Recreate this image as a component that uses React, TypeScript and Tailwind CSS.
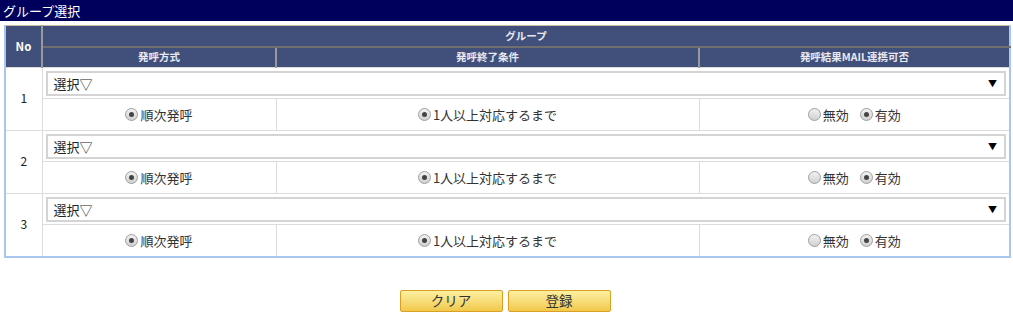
import React from 'react';

const font = { fontFamily: '"Noto Sans CJK JP", "Noto Sans", sans-serif' };

const Radio: React.FC<{ checked?: boolean; label: string }> = ({ checked, label }) => (
    <span className="inline-flex items-center gap-[2px] leading-none align-middle">
        <span className="w-[13px] h-[13px] rounded-full border border-[#a0a0a0] bg-gradient-to-b from-[#f2f2f2] to-[#d0d0d0] flex items-center justify-center">
            {checked && <span className="w-[5px] h-[5px] rounded-full bg-[#444]" />}
        </span>
        <span className="text-[13px] text-[#333] leading-none">{label}</span>
    </span>
);

const GroupRows: React.FC<{ no: number }> = ({ no }) => (
    <>
        <tr className="h-[30px]">
            <td rowSpan={2} className="border border-[#dcdcdc] text-center text-[12px] text-[#222] align-middle pb-[2px]">
                {no}
            </td>
            <td colSpan={3} className="border border-[#dcdcdc] px-[3px] pt-[3px] pb-[2px]">
                <div className="h-[25px] border-2 border-[#d4d4d4] bg-white flex items-center justify-between pl-[6px] pr-[7px]">
                    <span className="text-[13px] text-[#222] leading-none">選択▽</span>
                    <span className="text-[9px] text-black leading-none">▼</span>
                </div>
            </td>
        </tr>
        <tr className="h-[32px]">
            <td className="border border-[#dcdcdc] text-center align-middle pb-[5px]">
                <Radio checked label="順次発呼" />
            </td>
            <td className="border border-[#dcdcdc] text-center align-middle pb-[5px]">
                <Radio checked label="1人以上対応するまで" />
            </td>
            <td className="border border-[#dcdcdc] text-center align-middle pb-[5px]">
                <span className="inline-flex items-center gap-[11px] align-middle">
                    <Radio label="無効" />
                    <Radio checked label="有効" />
                </span>
            </td>
        </tr>
    </>
);

export default function App() {
    return (
        <div className="w-[1013px] h-[312px] bg-white" style={font}>
            <div className="h-[21px] bg-[#00005c] text-white text-[13px] leading-[21px] pl-[3px]">
                グループ選択
            </div>
            <div className="pt-[4px] pl-[4px] pr-[2px]">
                <table className="w-[1007px] border-collapse border-2 border-[#aac6ee] border-t-0 table-fixed">
                    <colgroup>
                        <col className="w-[37px]" />
                        <col className="w-[234px]" />
                        <col className="w-[423px]" />
                        <col />
                    </colgroup>
                    <thead>
                        <tr className="h-[21px] bg-[#414f7b] border-t border-[#cbbd9c]">
                            <th rowSpan={2} className="text-white text-[11.5px] font-bold border-r-2 border-[#9a9a9a]">
                                No
                            </th>
                            <th colSpan={3} className="text-[#e8e8ee] text-[10.5px] font-bold border-b-2 border-[#6f6f6f]">
                                グループ
                            </th>
                        </tr>
                        <tr className="h-[21px] bg-[#414f7b] text-[#e8e8ee] text-[10.5px] font-bold">
                            <th className="border-r-2 border-[#9a9a9a]">発呼方式</th>
                            <th className="border-r-2 border-[#9a9a9a]">発呼終了条件</th>
                            <th>発呼結果MAIL連携可否</th>
                        </tr>
                    </thead>
                    <tbody>
                        <GroupRows no={1} />
                        <GroupRows no={2} />
                        <GroupRows no={3} />
                    </tbody>
                </table>
            </div>
            <div className="flex justify-center gap-[5px] mt-[32px] pr-[3px]">
                <button className="w-[103px] h-[22px] rounded-[2px] border border-[#d9a024] bg-gradient-to-b from-[#fdf0a0] to-[#f1c94a] text-[13.5px] text-[#333] leading-none">
                    クリア
                </button>
                <button className="w-[103px] h-[22px] rounded-[2px] border border-[#d9a024] bg-gradient-to-b from-[#fdf0a0] to-[#f1c94a] text-[13.5px] text-[#333] leading-none">
                    登録
                </button>
            </div>
        </div>
    );
}
